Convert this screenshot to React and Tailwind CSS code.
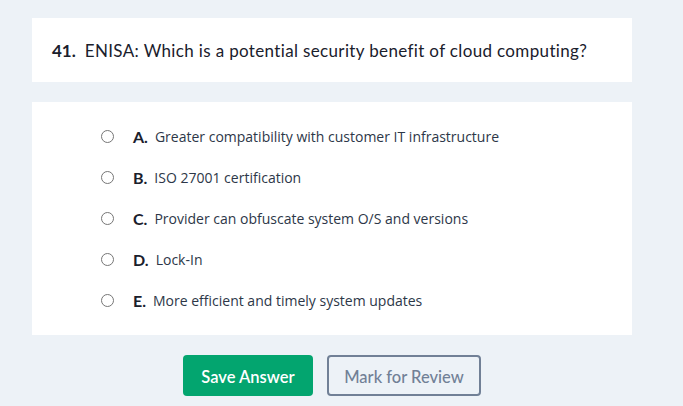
export default function App() {
  const opts = [
    ["A.", "Greater compatibility with customer IT infrastructure"],
    ["B.", "ISO 27001 certification"],
    ["C.", "Provider can obfuscate system O/S and versions"],
    ["D.", "Lock-In"],
    ["E.", "More efficient and timely system updates"],
  ];
  return (
    <div className="w-[683px] h-[406px] bg-[#edf2f7] overflow-hidden pt-[18px] pl-[32px]">
      <div className="w-[600px] h-[64px] bg-white flex items-center pl-[20px] pt-[2px] text-[17px] text-[#1a202c]" style={{ fontFamily: "Lato, sans-serif" }}>
        <span className="font-bold mr-[9px]">41.</span>
        <span className="font-normal tracking-[0.35px]">ENISA: Which is a potential security benefit of cloud computing?</span>
      </div>
      <div className="w-[600px] h-[233px] mt-[20px] bg-white pt-[14px] pl-[69px] flex flex-col">
        {opts.map(([l, t]) => (
          <div key={l} className="h-[41px] flex items-center">
            <span className="w-[13px] h-[13px] rounded-full border border-[#767676] shrink-0" />
            <span className="ml-[19px] font-bold text-[16px] text-[#1a202c] mr-[7px]" style={{ fontFamily: "Lato, sans-serif" }}>{l}</span>
            <span className="text-[14px] text-[#2d3748]" style={{ fontFamily: "'Open Sans', sans-serif" }}>{t}</span>
          </div>
        ))}
      </div>
      <div className="flex gap-[14px] mt-[20px] ml-[151px]" style={{ fontFamily: "Lato, sans-serif" }}>
        <button className="w-[130px] h-[41px] pt-[3px] rounded-[4px] bg-[#03a56f] text-white text-[16.5px] font-semibold">Save Answer</button>
        <button className="w-[154px] h-[41px] pt-[3px] rounded-[4px] border-2 border-[#718096] text-[#718096] text-[16.5px] font-medium">Mark for Review</button>
      </div>
    </div>
  );
}
